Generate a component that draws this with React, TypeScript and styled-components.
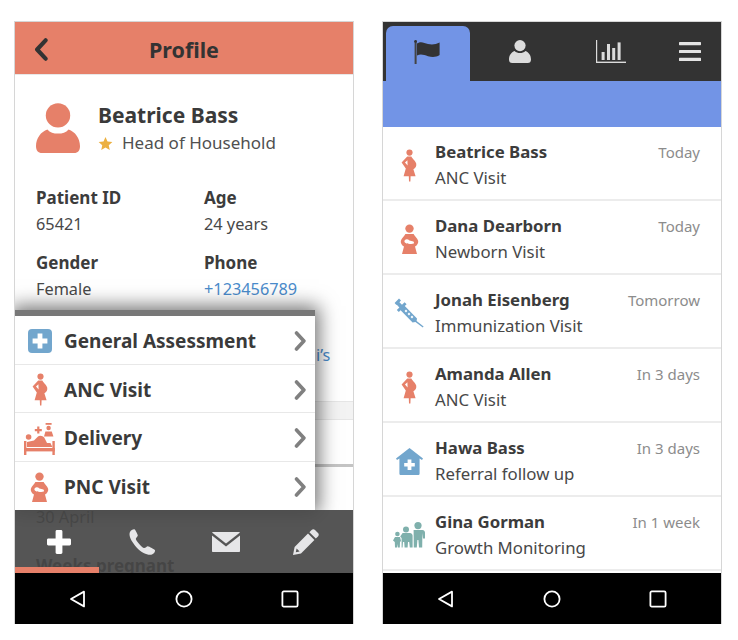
import * as React from 'react';
import styled, { createGlobalStyle } from 'styled-components';

const CORAL = '#e68069';
const BLUE_ICON = '#72a6cd';
const TEAL_ICON = '#7fb0ac';

const GlobalStyle = createGlobalStyle`
    html, body {
        margin: 0;
        padding: 0;
        background: #fff;
    }
    body {
        font-family: 'Noto Sans', 'Open Sans', sans-serif;
        color: #3c3c3c;
    }
`;

type IconProps = { color?: string };

const PregnantIcon: React.FC<IconProps> = ({ color = CORAL }) => (
    <svg width="16" height="33" viewBox="0 0 16 33" fill={color}>
        <circle cx="8.5" cy="3.6" r="3.1" />
        <path
            d="M6.2 7.4 L10.4 7.4 C11 9.6 14.4 11.2 15.2 14.6 C15.8 17.2 14.4 19.2 12.4 20.2 L14.6 27.2 L9.6 27.2 L9.4 32.6 L8 32.6 L7.8 27.2 L2.6 27.2 L4.8 19.6 L0.6 13.4 Z M6.4 11.2 L4 13.4 L6.6 16.4 Z"
            fillRule="evenodd"
        />
    </svg>
);

const MotherIcon: React.FC<IconProps> = ({ color = CORAL }) => (
    <svg width="19" height="31" viewBox="0 0 19 31" fill={color}>
        <circle cx="9.5" cy="4.6" r="4.2" />
        <path d="M5.4 10 L13.6 10 C14.4 12 17.6 14 18.2 17 C18.6 19.4 16.8 21.6 15 22.6 L17 30 L2 30 L4 22.6 C2.2 21.6 0.4 19.4 0.8 17 C1.4 14 4.6 12 5.4 10 Z" />
        <path
            d="M4.6 16.4 C6 14.6 8 15 9.4 16.4 L13.4 17.4 C14.6 18.2 13.8 20 12.4 19.8 C9.8 20.2 6.6 20 5.2 18.8 C4.4 18.2 4.2 17 4.6 16.4 Z"
            fill="#fff"
        />
    </svg>
);

const DeliveryIcon: React.FC<IconProps> = ({ color = CORAL }) => (
    <svg width="31" height="33" viewBox="0 0 31 33" fill={color}>
        <rect x="0" y="19" width="2.4" height="14" />
        <rect x="28.4" y="19" width="2.4" height="14" />
        <rect x="0" y="26" width="30.8" height="3.4" />
        <circle cx="4.6" cy="15" r="2.8" />
        <path d="M3 20 L10 18.4 L14 14.4 C16 13.2 20 14 21 17 L23 21 L26.4 21 L28.4 25 L3 25 Z" />
        <rect x="21.6" y="1" width="6" height="1.8" />
        <circle cx="24.6" cy="6" r="2.2" />
        <path d="M21.4 9.6 L27.8 9.6 L29.4 14.6 L20 14.6 Z" />
        <path d="M13.2 4.6 H15.4 V7 H17.8 V9.2 H15.4 V11.6 H13.2 V9.2 H10.8 V7 H13.2 Z" />
    </svg>
);

const SyringeIcon: React.FC<IconProps> = ({ color = BLUE_ICON }) => (
    <svg width="30" height="30" viewBox="0 0 30 30" fill={color}>
        <path d="M0.6 5 L5 0.6 L7 2.6 L5.4 4.2 L8 6.8 L10.6 4.2 L12.6 6.2 L10.8 8 L23 20.4 L22.6 23 L29.6 28.6 L28.8 29.6 L21.4 24 L18.6 24.6 L6.6 12.2 L4.8 14 L2.8 12 L5.4 9.4 L2.8 6.8 L2.4 7 Z" />
        <g fill="#fff">
            <rect x="11" y="12" width="2" height="2" transform="rotate(45 12 13)" />
            <rect x="14" y="15" width="2" height="2" transform="rotate(45 15 16)" />
            <rect x="17" y="18" width="2" height="2" transform="rotate(45 18 19)" />
        </g>
    </svg>
);

const ClinicIcon: React.FC<IconProps> = ({ color = BLUE_ICON }) => (
    <svg width="27" height="27" viewBox="0 0 27 27" fill={color}>
        <path d="M13.5 0 L27 10.6 L26 12 L23.6 10.4 L23.6 25.4 C23.6 26.4 23 27 22 27 L5 27 C4 27 3.4 26.4 3.4 25.4 L3.4 10.4 L1 12 L0 10.6 Z" />
        <path d="M11.6 11.6 H15.4 V15 H18.8 V18.6 H15.4 V22 H11.6 V18.6 H8.2 V15 H11.6 Z" fill="#fff" />
    </svg>
);

const FamilyIcon: React.FC<IconProps> = ({ color = TEAL_ICON }) => (
    <svg width="32" height="26" viewBox="0 0 32 26" fill={color}>
        <circle cx="25" cy="3.6" r="3.6" />
        <path d="M20.6 8 H29.4 C31 8 31.8 9 32 10.4 L32 16.4 L30 16.4 L29.4 11 L29.2 25.6 L26 25.6 L25.4 18 L24.4 18 L23.8 25.6 L20.8 25.6 Z" />
        <circle cx="13" cy="7.4" r="3" />
        <path d="M9.6 11 H17 C18.4 11 19.4 12 19.6 13.4 L19.6 25.6 L16.8 25.6 L16.2 20 L15 20 L14.6 25.6 L11.6 25.6 L11.2 20 L10 20 L9.6 25.6 L8.6 25.6 L8.6 16 L7.2 14.6 Z" />
        <circle cx="4.4" cy="12" r="2.3" />
        <path d="M2 15 H7 L8 19 L7 20 L6.8 25.6 L4.8 25.6 L4.4 22 L4 25.6 L2 25.6 L1.8 20 L0 18.6 Z" />
    </svg>
);

const CrossBadgeIcon: React.FC<IconProps> = ({ color = BLUE_ICON }) => (
    <svg width="24" height="24" viewBox="0 0 24 24">
        <rect width="24" height="24" rx="4" fill={color} />
        <path d="M9.6 4.6 H14.4 V9.6 H19.4 V14.4 H14.4 V19.4 H9.6 V14.4 H4.6 V9.6 H9.6 Z" fill="#fff" />
    </svg>
);

const Chevron: React.FC<{ direction: 'left' | 'right'; color: string; width: number; height: number }> = ({
    direction,
    color,
    width,
    height,
}) => (
    <svg width={width} height={height} viewBox="0 0 12 20" fill="none">
        <path
            d={direction === 'left' ? 'M10 2 L2.6 10 L10 18' : 'M2 2 L9.4 10 L2 18'}
            stroke={color}
            strokeWidth="3.6"
            strokeLinecap="round"
            strokeLinejoin="round"
        />
    </svg>
);

const SoftKeys: React.FC = () => (
    <NavBar>
        <svg width="18" height="18" viewBox="0 0 18 18" fill="none">
            <path d="M15 1.6 V16.4 L2 9 Z" stroke="#fff" strokeWidth="1.8" strokeLinejoin="round" />
        </svg>
        <svg width="18" height="18" viewBox="0 0 18 18" fill="none">
            <circle cx="9" cy="9" r="7.6" stroke="#fff" strokeWidth="1.8" />
        </svg>
        <svg width="18" height="18" viewBox="0 0 18 18" fill="none">
            <rect x="1.4" y="1.4" width="15.2" height="15.2" rx="1.4" stroke="#fff" strokeWidth="1.8" />
        </svg>
    </NavBar>
);

const menuItems = [
    { label: 'General Assessment', icon: <CrossBadgeIcon /> },
    { label: 'ANC Visit', icon: <PregnantIcon /> },
    { label: 'Delivery', icon: <DeliveryIcon /> },
    { label: 'PNC Visit', icon: <MotherIcon /> },
];

const visits = [
    { name: 'Beatrice Bass', visit: 'ANC Visit', when: 'Today', icon: <PregnantIcon /> },
    { name: 'Dana Dearborn', visit: 'Newborn Visit', when: 'Today', icon: <MotherIcon /> },
    { name: 'Jonah Eisenberg', visit: 'Immunization Visit', when: 'Tomorrow', icon: <SyringeIcon /> },
    { name: 'Amanda Allen', visit: 'ANC Visit', when: 'In 3 days', icon: <PregnantIcon /> },
    { name: 'Hawa Bass', visit: 'Referral follow up', when: 'In 3 days', icon: <ClinicIcon /> },
    { name: 'Gina Gorman', visit: 'Growth Monitoring', when: 'In 1 week', icon: <FamilyIcon /> },
];

const ProfileScreen: React.FC = () => (
    <Phone>
        <ProfileHeader>
            <BackButton>
                <Chevron direction="left" color="#333" width={16} height={23} />
            </BackButton>
            <HeaderTitle>Profile</HeaderTitle>
        </ProfileHeader>
        <ProfileBody>
            <PersonRow>
                <svg width="44" height="50" viewBox="0 0 44 50" fill={CORAL}>
                    <circle cx="22" cy="12.4" r="12.2" />
                    <path d="M11.4 26.4 C14 29.4 17.6 30.6 22 30.6 C26.4 30.6 30 29.4 32.6 26.4 C39 28.6 44 35 44 43 C44 47.6 42 50 38 50 L6 50 C2 50 0 47.6 0 43 C0 35 5 28.6 11.4 26.4 Z" />
                </svg>
                <PersonText>
                    <PersonName>Beatrice Bass</PersonName>
                    <PersonRole>
                        <svg width="15" height="15" viewBox="0 0 24 24" fill="#ecb040">
                            <path d="M12 1.5 L15.2 8.6 L23 9.4 L17.2 14.6 L18.8 22.4 L12 18.4 L5.2 22.4 L6.8 14.6 L1 9.4 L8.8 8.6 Z" />
                        </svg>
                        Head of Household
                    </PersonRole>
                </PersonText>
            </PersonRow>
            <Details>
                <Field>
                    <FieldLabel>Patient ID</FieldLabel>
                    <FieldValue>65421</FieldValue>
                </Field>
                <Field>
                    <FieldLabel>Age</FieldLabel>
                    <FieldValue>24 years</FieldValue>
                </Field>
                <Field>
                    <FieldLabel>Gender</FieldLabel>
                    <FieldValue>Female</FieldValue>
                </Field>
                <Field>
                    <FieldLabel>Phone</FieldLabel>
                    <FieldValue $link>+123456789</FieldValue>
                </Field>
            </Details>
            <ClippedLink>i’s</ClippedLink>
            <SectionBand />
            <SectionGap />
            <SectionRule />
            <Timeline>
                <FieldValue>30 April</FieldValue>
                <WeeksLabel>Weeks pregnant</WeeksLabel>
            </Timeline>
            <Menu>
                {menuItems.map(item => (
                    <MenuRow key={item.label}>
                        <MenuIcon>{item.icon}</MenuIcon>
                        <MenuLabel>{item.label}</MenuLabel>
                        <Chevron direction="right" color="#808080" width={13} height={20} />
                    </MenuRow>
                ))}
            </Menu>
            <ActionBar>
                <ActionProgress />
                <svg width="24" height="24" viewBox="0 0 24 24" fill="#fff">
                    <path d="M8.6 1.4 C8.6 0.6 9.2 0 10 0 H14 C14.8 0 15.4 0.6 15.4 1.4 V8.6 H22.6 C23.4 8.6 24 9.2 24 10 V14 C24 14.8 23.4 15.4 22.6 15.4 H15.4 V22.6 C15.4 23.4 14.8 24 14 24 H10 C9.2 24 8.6 23.4 8.6 22.6 V15.4 H1.4 C0.6 15.4 0 14.8 0 14 V10 C0 9.2 0.6 8.6 1.4 8.6 H8.6 Z" />
                </svg>
                <svg width="27" height="26" viewBox="0 0 27 26" fill="#e6e6e8">
                    <path d="M1 3 C2 1 4 0 5.4 0.2 C6.2 0.4 8.6 5 8.8 6.4 C8.8 7.6 6.8 8.6 6.8 10 C7 11.8 12.6 18 14.8 19 C16.4 19.4 17.6 17.2 18.8 17.2 C20.2 17.4 25.6 20.4 26 21.2 C26.4 22.6 24.8 24.8 23 25.4 C19.6 26.6 13 24.4 7.6 18.4 C1.8 12 -0.6 6.4 1 3 Z" />
                </svg>
                <svg width="28" height="20" viewBox="0 0 28 20" fill="#e6e6e8">
                    <path d="M1 0 H27 C27.4 0 27.8 0.2 28 0.6 L14 11.6 L0 0.6 C0.2 0.2 0.6 0 1 0 Z" />
                    <path d="M0 3.4 L14 14.4 L28 3.4 V19 C28 19.6 27.6 20 27 20 H1 C0.4 20 0 19.6 0 19 Z" />
                </svg>
                <svg width="26" height="26" viewBox="0 0 26 26" fill="#e6e6e8">
                    <path d="M18.6 1 C19.6 0 21 0 22 1 L25 4 C26 5 26 6.4 25 7.4 L22.8 9.6 L16.4 3.2 Z" />
                    <path d="M15 4.6 L21.4 11 L8 24.4 L0 26 L1.6 18 Z M3.6 19.4 L2.8 23.2 L6.6 22.4 Z" fillRule="evenodd" />
                </svg>
            </ActionBar>
        </ProfileBody>
        <SoftKeys />
    </Phone>
);

const VisitsScreen: React.FC = () => (
    <Phone>
        <TabBar>
            <Tab $active $width={84}>
                <svg width="26" height="24" viewBox="0 0 26 24" fill="#333">
                    <rect x="0.6" y="1" width="2" height="23" fill="#444" />
                    <circle cx="1.6" cy="1.4" r="1.4" />
                    <path d="M3 3.4 C7 0.8 10 2.8 14 4 C18 5 22 4.4 25.6 2.6 L25.6 15 C22 17.4 18 17.4 14 16.2 C10 15 6.6 13.6 3 15.6 Z" />
                </svg>
            </Tab>
            <Tab $width={100}>
                <svg width="22" height="23" viewBox="0 0 22 23" fill="#dcdcdc">
                    <circle cx="11" cy="5.6" r="5.6" />
                    <path d="M5.6 11 C7 12.4 9 13 11 13 C13 13 15 12.4 16.4 11 C19.8 12.4 22 15.4 22 19.4 C22 21.6 20.8 23 18.8 23 H3.2 C1.2 23 0 21.6 0 19.4 C0 15.4 2.2 12.4 5.6 11 Z" />
                </svg>
            </Tab>
            <Tab $width={82}>
                <svg width="30" height="23" viewBox="0 0 30 23" fill="#dcdcdc">
                    <rect x="0" y="0" width="1.2" height="23" />
                    <rect x="0" y="21.6" width="30" height="1.4" />
                    <rect x="5.6" y="12" width="3" height="8" />
                    <rect x="11" y="4" width="3" height="16" />
                    <rect x="16.2" y="8" width="3" height="12" />
                    <rect x="21.6" y="2.4" width="3" height="17.6" />
                </svg>
            </Tab>
            <MenuTab>
                <svg width="22" height="19" viewBox="0 0 22 19" fill="#e4e4e4">
                    <rect width="22" height="3.2" rx="0.6" />
                    <rect y="7.9" width="22" height="3.2" rx="0.6" />
                    <rect y="15.8" width="22" height="3.2" rx="0.6" />
                </svg>
            </MenuTab>
        </TabBar>
        <BlueBand />
        <VisitList>
            {visits.map(v => (
                <VisitRow key={v.name}>
                    <VisitIcon>{v.icon}</VisitIcon>
                    <VisitText>
                        <VisitName>{v.name}</VisitName>
                        <VisitType>{v.visit}</VisitType>
                    </VisitText>
                    <VisitWhen>{v.when}</VisitWhen>
                </VisitRow>
            ))}
        </VisitList>
        <SoftKeys />
    </Phone>
);

export default function App() {
    return (
        <Page>
            <GlobalStyle />
            <ProfileScreen />
            <VisitsScreen />
        </Page>
    );
}

const Page = styled.div`
    display: flex;
    gap: 28px;
    padding: 21px 0 0 14px;
`;

const Phone = styled.div`
    display: flex;
    flex-direction: column;
    width: 338px;
    height: 602px;
    border: 1px solid #d6d6d6;
    border-bottom: 0;
    background: #fff;
    overflow: hidden;
`;

const ProfileHeader = styled.div`
    position: relative;
    display: flex;
    flex: none;
    align-items: center;
    justify-content: center;
    box-sizing: border-box;
    height: 53px;
    padding-top: 2px;
    background: ${CORAL};
    border-bottom: 1px solid #e8e8e8;
`;

const BackButton = styled.div`
    position: absolute;
    left: 18px;
    top: 16px;
    line-height: 0;
`;

const HeaderTitle = styled.div`
    font-size: 21.5px;
    font-weight: 700;
    color: #333;
`;

const ProfileBody = styled.div`
    position: relative;
    flex: 1;
    overflow: hidden;
`;

const PersonRow = styled.div`
    display: flex;
    align-items: flex-start;
    gap: 18px;
    padding: 28px 21px 0;
`;

const PersonText = styled.div`
    display: flex;
    flex-direction: column;
    margin-top: -3px;
`;

const PersonName = styled.div`
    font-size: 21px;
    font-weight: 700;
    line-height: 30px;
    color: #3a3a3a;
`;

const PersonRole = styled.div`
    display: flex;
    align-items: center;
    gap: 9px;
    font-size: 17px;
    line-height: 26px;
    color: #505050;
`;

const Details = styled.div`
    display: grid;
    grid-template-columns: 168px 1fr;
    row-gap: 13px;
    padding: 29px 0 0 21px;
`;

const Field = styled.div`
    display: flex;
    flex-direction: column;
    white-space: nowrap;
`;

const FieldLabel = styled.div`
    font-size: 17px;
    font-weight: 700;
    line-height: 26px;
    color: #3c3c3c;
`;

const FieldValue = styled.div<{ $link?: boolean }>`
    font-size: 16.3px;
    line-height: 26px;
    color: ${p => (p.$link ? '#4a8bcb' : '#484848')};
`;

// the tail of a longer link, everything before it is behind the menu
const ClippedLink = styled(FieldValue).attrs({ $link: true })`
    margin-top: 40px;
    padding-left: 301px;
`;

const SectionBand = styled.div`
    box-sizing: border-box;
    height: 19px;
    margin-top: 33px;
    background: #f3f3f3;
    border-top: 1px solid #e6e6e6;
    border-bottom: 1px solid #e6e6e6;
`;

const SectionGap = styled.div`
    height: 44px;
`;

const SectionRule = styled.div`
    height: 3px;
    background: #c4c4c4;
`;

const Timeline = styled.div`
    display: flex;
    flex-direction: column;
    padding: 37px 21px 0;
`;

const WeeksLabel = styled(FieldLabel)`
    margin-top: 23px;
`;

const Menu = styled.div`
    position: absolute;
    left: 0;
    top: 235px;
    width: 300px;
    border-top: 6px solid #787878;
    background: #fff;
    box-shadow: 0 0 18px 4px rgba(0, 0, 0, 0.55);
`;

const MenuRow = styled.div`
    display: flex;
    align-items: center;
    box-sizing: border-box;
    height: 48.5px;
    padding: 3px 8px 0 0;
    border-bottom: 1px solid #e8e8e8;

    &:last-child {
        border-bottom: 0;
    }
`;

const MenuIcon = styled.div`
    display: flex;
    flex: none;
    align-items: center;
    justify-content: center;
    width: 49px;
`;

const MenuLabel = styled.div`
    flex: 1;
    font-size: 19px;
    font-weight: 700;
    color: #3a3a3a;
`;

const ActionBar = styled.div`
    position: absolute;
    left: 0;
    right: 0;
    bottom: 0;
    display: grid;
    grid-template-columns: 82px 83px 81px 26px;
    align-items: center;
    box-sizing: border-box;
    height: 63px;
    padding-left: 32px;
    background: rgba(70, 70, 70, 0.92);
`;

const ActionProgress = styled.div`
    position: absolute;
    left: 0;
    bottom: 0;
    width: 84px;
    height: 6px;
    background: ${CORAL};
`;

const NavBar = styled.div`
    display: flex;
    flex: none;
    align-items: center;
    justify-content: space-between;
    box-sizing: border-box;
    height: 51px;
    padding: 0 54px;
    background: #000;
`;

const TabBar = styled.div`
    display: flex;
    flex: none;
    align-items: flex-end;
    height: 59px;
    padding-left: 3px;
    background: #333;
`;

const Tab = styled.div<{ $active?: boolean; $width: number }>`
    display: flex;
    align-items: center;
    justify-content: center;
    box-sizing: border-box;
    width: ${p => p.$width}px;
    height: ${p => (p.$active ? '55px' : '59px')};
    padding: ${p => (p.$active ? '0 2px 4px 0' : '0')};
    background: ${p => (p.$active ? '#7294e6' : 'transparent')};
    border-radius: 7px 7px 0 0;
`;

const MenuTab = styled.div`
    display: flex;
    flex: 1;
    align-self: center;
    justify-content: flex-end;
    padding-right: 20px;
`;

const BlueBand = styled.div`
    flex: none;
    height: 46px;
    background: #7294e6;
`;

const VisitList = styled.div`
    flex: 1;
    overflow: hidden;
`;

const VisitRow = styled.div`
    display: flex;
    align-items: center;
    box-sizing: border-box;
    height: 74px;
    padding: 4px 21px 0 0;
    border-bottom: 2px solid #ececec;
`;

const VisitIcon = styled.div`
    display: flex;
    flex: none;
    align-items: center;
    justify-content: center;
    width: 52px;
`;

const VisitText = styled.div`
    flex: 1;
    display: flex;
    flex-direction: column;
`;

const VisitName = styled.div`
    font-size: 16.8px;
    font-weight: 700;
    line-height: 26px;
    color: #3c3c3c;
`;

const VisitType = styled.div`
    font-size: 16.8px;
    line-height: 26px;
    color: #484848;
`;

const VisitWhen = styled.div`
    align-self: flex-start;
    margin-top: 10px;
    font-size: 15px;
    line-height: 22px;
    color: #8c8c8c;
`;
